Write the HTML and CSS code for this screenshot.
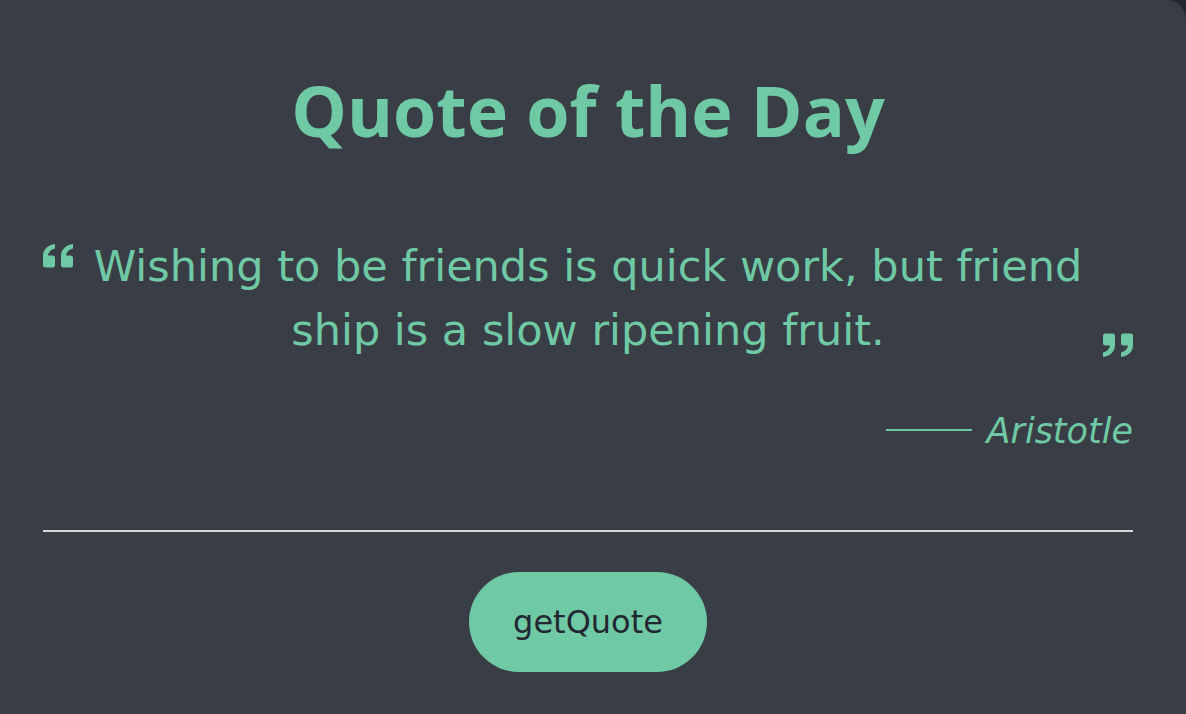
FILE: index.html
```html
<!DOCTYPE html>
<html lang="en">
<head>
<meta charset="utf-8">
<title>Quote of the Day</title>
<link rel="stylesheet" href="styles.css">
</head>
<body>
<main class="card">
  <h1 class="title">Quote of the Day</h1>
  <section class="quote">
    <svg class="mark mark-left" viewBox="0 0 30 24" aria-hidden="true">
      <path d="M12 0 C5 1 0 5 0 12 V21 a2.5 2.5 0 0 0 2.5 2.5 H9.5 a2.5 2.5 0 0 0 2.5 -2.5 V14 a2.5 2.5 0 0 0 -2.5 -2.5 H5 C5.5 8 8 5.5 12 4.5 Z"/>
      <path d="M30 0 C23 1 18 5 18 12 V21 a2.5 2.5 0 0 0 2.5 2.5 H27.5 a2.5 2.5 0 0 0 2.5 -2.5 V14 a2.5 2.5 0 0 0 -2.5 -2.5 H23 C23.5 8 26 5.5 30 4.5 Z"/>
    </svg>
    <p class="text">Wishing to be friends is quick work, but friend ship is a slow ripening fruit.</p>
    <svg class="mark mark-right" viewBox="0 0 30 24" aria-hidden="true">
      <g transform="rotate(180 15 12)">
        <path d="M12 0 C5 1 0 5 0 12 V21 a2.5 2.5 0 0 0 2.5 2.5 H9.5 a2.5 2.5 0 0 0 2.5 -2.5 V14 a2.5 2.5 0 0 0 -2.5 -2.5 H5 C5.5 8 8 5.5 12 4.5 Z"/>
        <path d="M30 0 C23 1 18 5 18 12 V21 a2.5 2.5 0 0 0 2.5 2.5 H27.5 a2.5 2.5 0 0 0 2.5 -2.5 V14 a2.5 2.5 0 0 0 -2.5 -2.5 H23 C23.5 8 26 5.5 30 4.5 Z"/>
      </g>
    </svg>
  </section>
  <div class="author">
    <span class="dash"></span>
    <span class="name">Aristotle</span>
  </div>
  <hr class="divider">
  <div class="actions">
    <button class="btn" type="button">getQuote</button>
  </div>
</main>
</body>
</html>
```

FILE: styles.css
```css
* { box-sizing: border-box; }

html, body {
  margin: 0;
  height: 100%;
}

body {
  background: #222831;
  font-family: "DejaVu Sans", "Open Sans", sans-serif;
  overflow: hidden;
}

.card {
  background: #393e46;
  border-top-right-radius: 20px;
  min-height: 714px;
  padding: 62px 53px 0 43px;
  color: #70c9a5;
}

.title {
  margin: 0;
  text-align: center;
  font-family: "Open Sans", sans-serif;
  font-size: 70px;
  font-weight: 700;
  line-height: 96px;
  letter-spacing: 0;
}

.quote {
  display: flex;
  align-items: flex-start;
  margin-top: 76px;
}

.mark {
  width: 30px;
  height: 24px;
  fill: #70c9a5;
  flex: none;
}

.mark-left { margin-top: 10px; }

.mark-right { align-self: flex-end; margin-bottom: 5px; }

.text {
  flex: 1;
  margin: 0;
  padding: 0 4px;
  text-align: center;
  font-size: 43px;
  line-height: 64px;
  font-weight: 400;
}

.author {
  display: flex;
  justify-content: flex-end;
  align-items: center;
  gap: 15px;
  margin-top: 47px;
}

.dash {
  width: 86px;
  height: 2px;
  margin-top: -2px;
  background: #70c9a5;
}

.name {
  font-style: italic;
  font-size: 35px;
  line-height: 44px;
}

.divider {
  border: none;
  border-top: 2px solid #d6d6d6;
  margin: 77px 0 0;
}

.actions {
  display: flex;
  justify-content: center;
  margin-top: 40px;
}

.btn {
  width: 238px;
  height: 100px;
  border: none;
  border-radius: 50px;
  background: #70c9a5;
  color: #222831;
  font-family: "DejaVu Sans", "Open Sans", sans-serif;
  font-size: 32px;
}
```
